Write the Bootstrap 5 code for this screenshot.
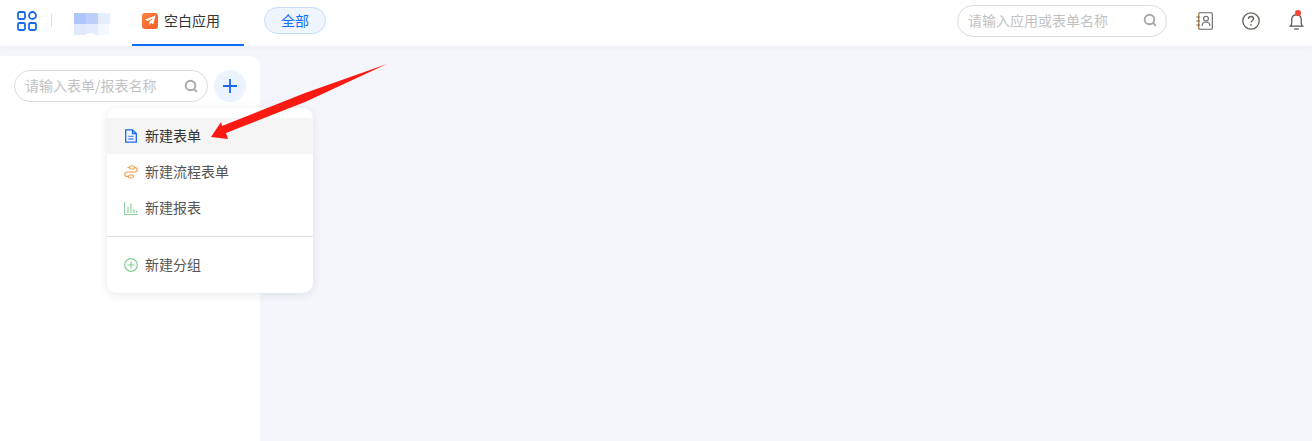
<!DOCTYPE html>
<html lang="zh-CN">
<head>
  <meta charset="UTF-8">
  <title>空白应用</title>
  <link href="https://cdn.jsdelivr.net/npm/bootstrap@5.3.0/dist/css/bootstrap.min.css" rel="stylesheet">
<style>
  html, body { height: 441px; overflow: hidden; }
  body { background: #f4f6fb; font-family: "Noto Sans CJK SC", "Liberation Sans", sans-serif; font-size: 14px; color: #555; position: relative; }

  /* top bar */
  .topbar { height: 46px; padding-bottom: 5px; background: #fff; box-shadow: 0 1px 4px rgba(30,50,90,.05); }
  .grid-btn { width: 20px; margin-left: 17px; }
  .top-sep { width: 1px; height: 13px; background: #ddd; margin-left: 14px; }
  .logo-blur { width: 37px; height: 25px; margin-left: 22px; margin-top: 7px; }
  .app-tab { width: 112px; height: 46px; margin-left: 21px; margin-bottom: -5px; padding-bottom: 3px; border-bottom: 2px solid #0d6efd; color: #333; padding-left: 10px; gap: 6px; }
  .app-icon { width: 16px; height: 16px; border-radius: 3px; background: linear-gradient(135deg, #f9813c, #f25f2a); }
  .all-pill { width: 62px; height: 27px; margin-left: 20px; border-radius: 14px; background: #eef5ff; border: 1px solid #c5dcf8; color: #0d6efd; line-height: 25px; text-align: center; }
  .search-pill { border: 1px solid #ddd; border-radius: 16px; background: #fff; color: #c2c2c2; height: 32px; padding: 0 9px 1px 10px; }
  .search-top { width: 210px; margin-right: 29px; }
  .tool-contact { width: 17px; height: 20px; margin-right: 29px; }
  .tool-help { width: 18px; height: 20px; margin-right: 28px; }
  .bell-wrap { position: relative; width: 17px; margin-right: 7px; }
  .bell-ico { width: 17px; height: 20px; }
  .bell-dot { position: absolute; top: -1px; left: 7px; width: 6px; height: 6px; border-radius: 50%; background: #f4472f; }

  /* side panel */
  .side-panel { width: 260px; height: 385px; margin-top: 10px; background: #fff; border-top-right-radius: 10px; padding: 14px 14px 0; }
  .search-side { width: 194px; }
  .plus-btn { width: 32px; height: 32px; margin-left: 6px; border-radius: 50%; background: #ebf3ff; }

  /* dropdown menu */
  .new-menu { position: absolute; left: 107px; top: 108px; width: 206px; height: 185px; background: #fff; border-radius: 10px; box-shadow: 0 2px 10px rgba(30,40,70,.1); padding-top: 10px; }
  .menu-row { height: 36px; padding-left: 17px; gap: 7px; color: #555; padding-bottom: 1px; }
  .menu-row.is-hover { background: #f5f5f5; color: #333; }
  .menu-line { height: 1px; background: #e2e2e2; margin: 10px 0; }
  .menu-ico { width: 14px; height: 14px; flex: none; }

  /* annotation arrow */
  .red-arrow { position: absolute; left: 205px; top: 58px; width: 190px; height: 90px; }
</style>
</head>
<body>

  <!-- Top bar -->
  <header class="topbar d-flex align-items-center">
    <svg class="grid-btn" viewBox="0 0 20 20" fill="none" stroke="#1769f0" stroke-width="1.8">
      <rect x="1" y="1" width="7" height="7" rx="1.5"/><rect x="12" y="1" width="7" height="7" rx="3.5"/>
      <rect x="1" y="12" width="7" height="7" rx="1.5"/><rect x="12" y="12" width="7" height="7" rx="1.5"/>
    </svg>
    <div class="top-sep"></div>
    <svg class="logo-blur" viewBox="0 0 37 25">
      <rect x="0" y="0" width="37" height="25" fill="#fff"/>
      <rect x="0" y="1" width="12" height="11" fill="#afc6fb"/>
      <rect x="12" y="1" width="12" height="11" fill="#bcd0fb"/>
      <rect x="24" y="1" width="12" height="11" fill="#e6eefe"/>
      <rect x="0" y="12" width="12" height="11" fill="#dfe8fd"/>
      <path d="M12 12h12v12l-6-3-6 1z" fill="#e3ebfe"/>
      <rect x="24" y="12" width="11" height="11" fill="#f3f7ff"/>
    </svg>
    <div class="app-tab d-flex align-items-center">
      <span class="app-icon d-flex align-items-center justify-content-center">
        <svg width="11" height="11" viewBox="0 0 12 12"><path d="M11.5.5 0 5l3 1.600L9 3 4.600 7.600V11l2-2.400L9 10z" fill="#fff"/></svg>
      </span>
      空白应用
    </div>
    <div class="all-pill">全部</div>

    <div class="search-pill search-top d-flex align-items-center justify-content-between ms-auto">
      <span>请输入应用或表单名称</span>
      <svg width="14" height="14" viewBox="0 0 14 14" fill="none" stroke="#a8a8a8" stroke-width="1.9"><circle cx="6.500" cy="6.500" r="4.800"/><path d="M10 10l2.800 2.800"/></svg>
    </div>
    <svg class="tool-contact" viewBox="0 0 17 20" fill="none" stroke="#666" stroke-width="1.100">
      <rect x="2.700" y="1.700" width="13.600" height="16.600" rx="1"/>
      <path d="M2.700 2v16" stroke="#c98a4a"/>
      <path d="M.3 6h3.600M.3 10h3.600M.3 14h3.600"/>
      <circle cx="10" cy="7.600" r="2.400"/><path d="M6 15c.2-2.800 1.900-4 4-4s3.800 1.200 4 4"/>
    </svg>
    <svg class="tool-help" viewBox="0 0 18 20" fill="none" stroke="#6a5f55" stroke-width="1.300">
      <circle cx="9" cy="10" r="8.200"/>
      <path d="M6.500 8c0-1.500 1.100-2.500 2.500-2.500s2.500 1 2.500 2.300c0 1.800-2.500 1.900-2.500 3.700"/><path d="M9 13.300v1.500"/>
    </svg>
    <div class="bell-wrap">
      <svg class="bell-ico d-block" viewBox="0 0 18 20" fill="none" stroke="#555" stroke-width="1.300">
        <path d="M2.500 15.500c1.200-1 1.500-2 1.500-4V8.500C4 5.500 6 3.500 9 3.500s5 2 5 5v3c0 2 .3 3 1.500 4z"/><path d="M6.500 18.500h5"/>
      </svg>
      <span class="bell-dot"></span>
    </div>
  </header>

  <!-- Side panel -->
  <aside class="side-panel">
    <div class="d-flex align-items-center">
      <div class="search-pill search-side d-flex align-items-center justify-content-between">
        <span>请输入表单/报表名称</span>
        <svg width="14" height="14" viewBox="0 0 14 14" fill="none" stroke="#a8a8a8" stroke-width="1.900"><circle cx="6.500" cy="6.500" r="4.800"/><path d="M10 10l2.800 2.800"/></svg>
      </div>
      <div class="plus-btn d-flex align-items-center justify-content-center">
        <svg width="14" height="14" viewBox="0 0 14 14" stroke="#1769f0" stroke-width="1.800"><path d="M7 0v14M0 7h14"/></svg>
      </div>
    </div>
  </aside>

  <!-- New item menu -->
  <div class="new-menu">
    <div class="menu-row is-hover d-flex align-items-center">
      <svg class="menu-ico" viewBox="0 0 14 14" fill="none" stroke="#1769f0" stroke-width="1.300"><path d="M1.700.8h6.800l3.800 3.700v8.700H1.700z"/><path d="M8.500 1v3.500H12"/><path d="M4.300 7.300h5.400M4.300 10h5.400" stroke="#5d90f5"/></svg>
      新建表单
    </div>
    <div class="menu-row d-flex align-items-center">
      <svg class="menu-ico" viewBox="0 0 14 14" fill="none" stroke="#f5a04c" stroke-width="1.200"><rect x="5.500" y="1" width="5" height="3" rx="1.500"/><rect x="4.500" y="10" width="5" height="3" rx="1.500"/><path d="M5.500 2.500H3.500M10.500 2.500h.5a2.200 2.200 0 0 1 0 4.500H3a2.200 2.200 0 0 0 0 4.500h1.500"/></svg>
      新建流程表单
    </div>
    <div class="menu-row d-flex align-items-center">
      <svg class="menu-ico" viewBox="0 0 14 14" fill="none" stroke="#8fd3a2" stroke-width="1.200"><path d="M.5 1v12.500H14"/><path d="M4 12V6M7 12V2.500M10 12V8M12.500 12V9.500"/></svg>
      新建报表
    </div>
    <div class="menu-line"></div>
    <div class="menu-row d-flex align-items-center">
      <svg class="menu-ico" viewBox="0 0 14 14" fill="none" stroke="#86cf98" stroke-width="1.200"><circle cx="7" cy="7" r="6.300"/><path d="M7 3.500v7M3.500 7h7"/></svg>
      新建分组
    </div>
  </div>

  <!-- Red annotation arrow -->
  <svg class="red-arrow" viewBox="0 0 190 90"><path d="M182 6 100 35 17 68 16 64 6 79 23 81 21 75 100 44z" fill="#fb1a12"/></svg>

</body>
</html>
